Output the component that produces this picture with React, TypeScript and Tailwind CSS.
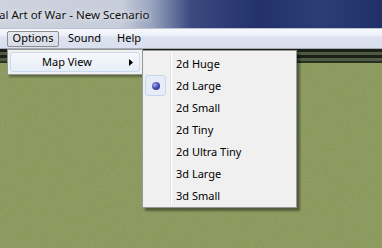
import React from 'react';

const mapViews = ['2d Huge', '2d Large', '2d Small', '2d Tiny', '2d Ultra Tiny', '3d Large', '3d Small'];

export default function App() {
  const selected = '2d Large';

  return (
    <div className="relative w-[382px] h-[248px] overflow-hidden flex flex-col font-['Noto_Sans',sans-serif] text-[11px] text-black">
      {/* title bar */}
      <div className="h-[28px] shrink-0 flex items-center bg-[linear-gradient(to_right,#cdd3de_0%,#c6ccda_32%,#96a1bd_40%,#3a4a80_50%,#22316a_68%,#2c3d76_84%,#203067_100%)]">
        <span className="ml-[-1px] mt-[1px] text-[11.5px] text-[#111] [text-shadow:0_0_6px_#fff]">
          al Art of War - New Scenario
        </span>
      </div>
      <div className="h-px shrink-0 bg-[#b9c1d3]" />

      {/* menu bar */}
      <div className="h-[19px] shrink-0 flex items-center bg-[linear-gradient(to_bottom,#f7f9fc_0%,#eef1f8_30%,#dde2f0_45%,#d9dfee_100%)]">
        <div className="ml-[7px] h-[16px] w-[52px] flex items-center justify-center rounded-[2px] border border-[#8e8f8f] bg-[linear-gradient(to_bottom,#e6e9ef,#d6dbe6)]">
          Options
        </div>
        <span className="ml-[9px]">Sound</span>
        <span className="ml-[16px]">Help</span>
      </div>
      <div className="h-px shrink-0 bg-[#a5a9b2]" />

      {/* map toolbar strip */}
      <div className="shrink-0 flex flex-col">
        <div className="h-[3px] bg-[#1a2015]" />
        <div className="h-[3px] bg-[#4d5b45]" />
        <div className="h-[3px] bg-[#1a2015]" />
        <div className="h-[3px] bg-[#4d5b45]" />
        <div className="h-[2px] bg-[#283020]" />
      </div>

      {/* game area */}
      <div className="relative flex-1 bg-[#8a985c]">
        <svg className="absolute inset-0 w-full h-full opacity-50" aria-hidden>
          <filter id="grain">
            <feTurbulence type="fractalNoise" baseFrequency="0.9" numOctaves="2" seed="4" />
            <feColorMatrix values="0 0 0 0 0.35  0 0 0 0 0.4  0 0 0 0 0.2  0 0 0 1.6 -0.5" />
          </filter>
          <rect width="100%" height="100%" filter="url(#grain)" />
        </svg>
      </div>

      {/* Options dropdown */}
      <div className="absolute z-20 left-[7px] top-[49px] w-[136px] h-[26px] p-[2px] border border-[#979797] bg-[#f0f0f0] shadow-[2px_2px_2px_rgba(0,0,0,0.35)]">
        <div className="h-[20px] flex items-center rounded-[3px] border border-[#c9d9ee] bg-[linear-gradient(to_bottom,#f5f8fc,#e8eef7)]">
          <span className="ml-[31px]">Map View</span>
          <svg className="ml-auto mr-[6px]" width="4" height="7" viewBox="0 0 4 7">
            <path d="M0 0 L4 3.5 L0 7 Z" fill="#000" />
          </svg>
        </div>
      </div>

      {/* Map View submenu */}
      <div className="absolute z-20 left-[142px] top-[50px] w-[155px] h-[158px] py-[2px] border border-[#979797] bg-[#f0f0f0] shadow-[3px_3px_2px_rgba(0,0,0,0.4)]">
        <div className="absolute left-[27px] top-[2px] bottom-[2px] w-px bg-[#e2e3e3]" />
        <div className="absolute left-[28px] top-[2px] bottom-[2px] w-px bg-white" />
        {mapViews.map((v) => (
          <div key={v} className="relative h-[22px] flex items-center">
            {v === selected && (
              <div className="absolute left-[2px] top-0 w-[21px] h-[21px] rounded-[3px] border border-[#c6d6ee] bg-[#e6edf8] flex items-center justify-center">
                <div className="w-[8px] h-[8px] rounded-full bg-[radial-gradient(circle_at_35%_35%,#a7aef0_0%,#4a51b8_45%,#1d2275_100%)]" />
              </div>
            )}
            <span className="ml-[33px]">{v}</span>
          </div>
        ))}
      </div>
    </div>
  );
}
